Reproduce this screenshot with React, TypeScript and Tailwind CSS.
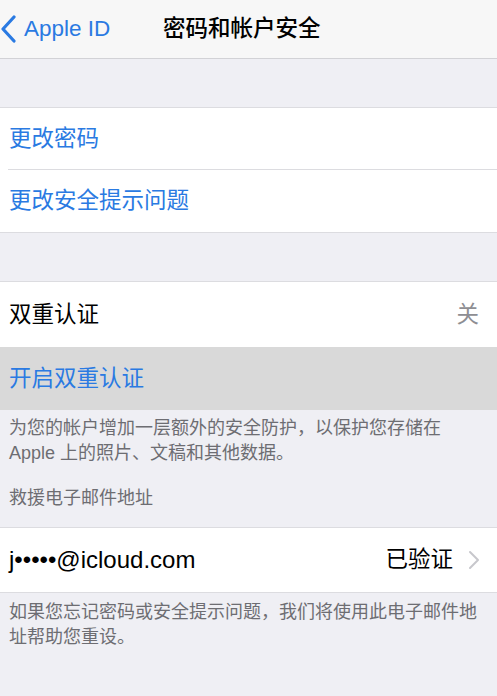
const font = {
  fontFamily: '"Liberation Sans", "Noto Sans CJK SC", sans-serif',
};

const Chevron = () => (
  <svg width="12" height="20" viewBox="0 0 12 20" className="ml-[15px]">
    <path d="M2 2 L10 10 L2 18" fill="none" stroke="#c7c7cc" strokeWidth="2" strokeLinecap="round" strokeLinejoin="round" />
  </svg>
);

export default function App() {
  return (
    <div style={font} className="w-[497px] h-[696px] bg-[#efeff4] overflow-hidden">
      {/* nav bar */}
      <div className="relative h-[59px] bg-[#f7f7f7] border-b border-[#d2d2d6] flex items-center">
        <div className="flex items-center text-[#2a7ae2] pl-[1px]">
          <svg width="16" height="28" viewBox="0 0 16 28">
            <path d="M13 2 L2 14 L13 26" fill="none" stroke="#2a7ae2" strokeWidth="3.2" strokeLinecap="round" strokeLinejoin="round" />
          </svg>
          <span className="ml-[7px] text-[22.5px] leading-none">Apple ID</span>
        </div>
        <div className="absolute left-[163px] top-0 h-full flex items-center text-[22.5px] font-medium text-black leading-none">
          密码和帐户安全
        </div>
      </div>

      <div className="h-[48px]" />

      {/* section 1 */}
      <div className="bg-white border-y border-[#dcdce0]">
        <div className="h-[61px] flex items-center pl-[9px] text-[22.5px] text-[#2a7ae2]">更改密码</div>
        <div className="ml-[8px] h-px bg-[#dcdce0]" />
        <div className="h-[62px] flex items-center pl-[9px] text-[22.5px] text-[#2a7ae2]">更改安全提示问题</div>
      </div>

      <div className="h-[48px]" />

      {/* section 2 */}
      <div className="bg-white border-t border-[#dcdce0]">
        <div className="h-[65px] flex items-center justify-between pl-[9px] pr-[18px] text-[22.5px] text-black">
          <span>双重认证</span>
          <span className="text-[#8e8e93]">关</span>
        </div>
        <div className="h-[63px] flex items-center pl-[9px] bg-[#d9d9d9] text-[22.5px] text-[#2a7ae2]">开启双重认证</div>
      </div>

      <div className="pt-[6px] pl-[9px] text-[18px] leading-[25px] text-[#6d6d72]">
        为您的帐户增加一层额外的安全防护，以保护您存储在
        <br />
        Apple 上的照片、文稿和其他数据。
      </div>

      <div className="mt-[20px] pb-[16px] pl-[9px] text-[18px] leading-[25px] text-[#6d6d72]">救援电子邮件地址</div>

      {/* email */}
      <div className="bg-white border-y border-[#dcdce0] h-[66px] flex items-center justify-between pl-[9px] pr-[17px]">
        <span className="text-[24px] text-black">j•••••@icloud.com</span>
        <span className="flex items-center text-[22.5px] text-black">
          已验证
          <Chevron />
        </span>
      </div>

      <div className="pt-[7px] pl-[9px] text-[18px] leading-[25px] text-[#6d6d72]">
        如果您忘记密码或安全提示问题，我们将使用此电子邮件地
        <br />
        址帮助您重设。
      </div>
    </div>
  );
}
